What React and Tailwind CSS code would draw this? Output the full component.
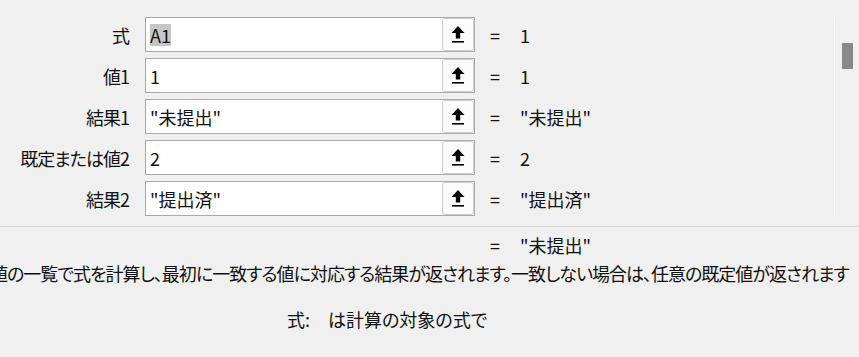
import React from 'react'

const args = [
  { label: '式', value: 'A1', result: '1', selected: true },
  { label: '値1', value: '1', result: '1' },
  { label: '結果1', value: '"未提出"', result: '"未提出"' },
  { label: '既定または値2', value: '2', result: '2' },
  { label: '結果2', value: '"提出済"', result: '"提出済"' },
]

function RefIcon() {
  return (
    <svg width="14" height="17" viewBox="0 0 14 17" fill="#000">
      <polygon points="7,0 13.5,7 9.2,7 9.2,12.5 4.8,12.5 4.8,7 0.5,7" />
      <rect x="1" y="15" width="12" height="1.6" />
    </svg>
  )
}

export default function App() {
  return (
    <div
      className="w-[859px] h-[357px] overflow-hidden bg-[#f0f0f0] text-[#111] text-[18px] leading-[24px] [font-feature-settings:'palt']"
      style={{ fontFamily: "'Noto Sans CJK JP', 'Noto Sans', sans-serif" }}
    >
      {/* clipped group title */}
      <div className="-mt-[21px] h-[24px] pl-[1px] text-[16px] whitespace-nowrap">SWITCH</div>

      <div className="flex -mt-[3px]">
        {/* argument rows */}
        <div className="w-[834px] flex flex-col gap-[6px] pt-[17px]">
          {args.map((a) => (
            <div key={a.label} className="grid grid-cols-[129px_330px_1fr] gap-x-[16px] h-[35px] items-center">
              <div className="text-right whitespace-nowrap tracking-[-1px]">{a.label}</div>
              <div className="h-[35px] flex border border-[#a9a9a9] bg-white">
                <div className="flex-1 flex items-center pl-[4px]">
                  <span className={a.selected ? 'bg-[#c6c6c6] leading-[22px]' : 'leading-[22px]'}>{a.value}</span>
                </div>
                <div className="w-[32px] flex items-center justify-center bg-[#fcfcfc] border border-[#cfcfcf] rounded-[3px]">
                  <RefIcon />
                </div>
              </div>
              <div className="flex whitespace-nowrap -ml-[1px]">
                <span className="w-[30px]">=</span>
                <span>{a.result}</span>
              </div>
            </div>
          ))}
        </div>

        {/* divider and scrollbar */}
        <div className="mt-[17px] w-px h-[199px] bg-white" />
        <div className="pl-[7px] pt-[43px]">
          <div className="w-[11px] h-[26px] bg-[#8a8a8a]" />
        </div>
      </div>

      <div className="mt-[10px] h-px bg-[#d9d9d9]" />

      <div className="grid grid-cols-[129px_330px_1fr] gap-x-[16px] mt-[6px]">
        <div />
        <div />
        <div className="flex whitespace-nowrap -ml-[1px]">
          <span className="w-[30px]">=</span>
          <span>"未提出"</span>
        </div>
      </div>

      <p className="-ml-[10px] mt-[4px] whitespace-nowrap tracking-[-1px]">
        値の一覧で式を計算し、最初に一致する値に対応する結果が返されます。一致しない場合は、任意の既定値が返されます
      </p>

      <div className="flex mt-[22px] pl-[287px] whitespace-nowrap">
        <span className="w-[41px]">式:</span>
        <span>は計算の対象の式で</span>
      </div>
    </div>
  )
}
